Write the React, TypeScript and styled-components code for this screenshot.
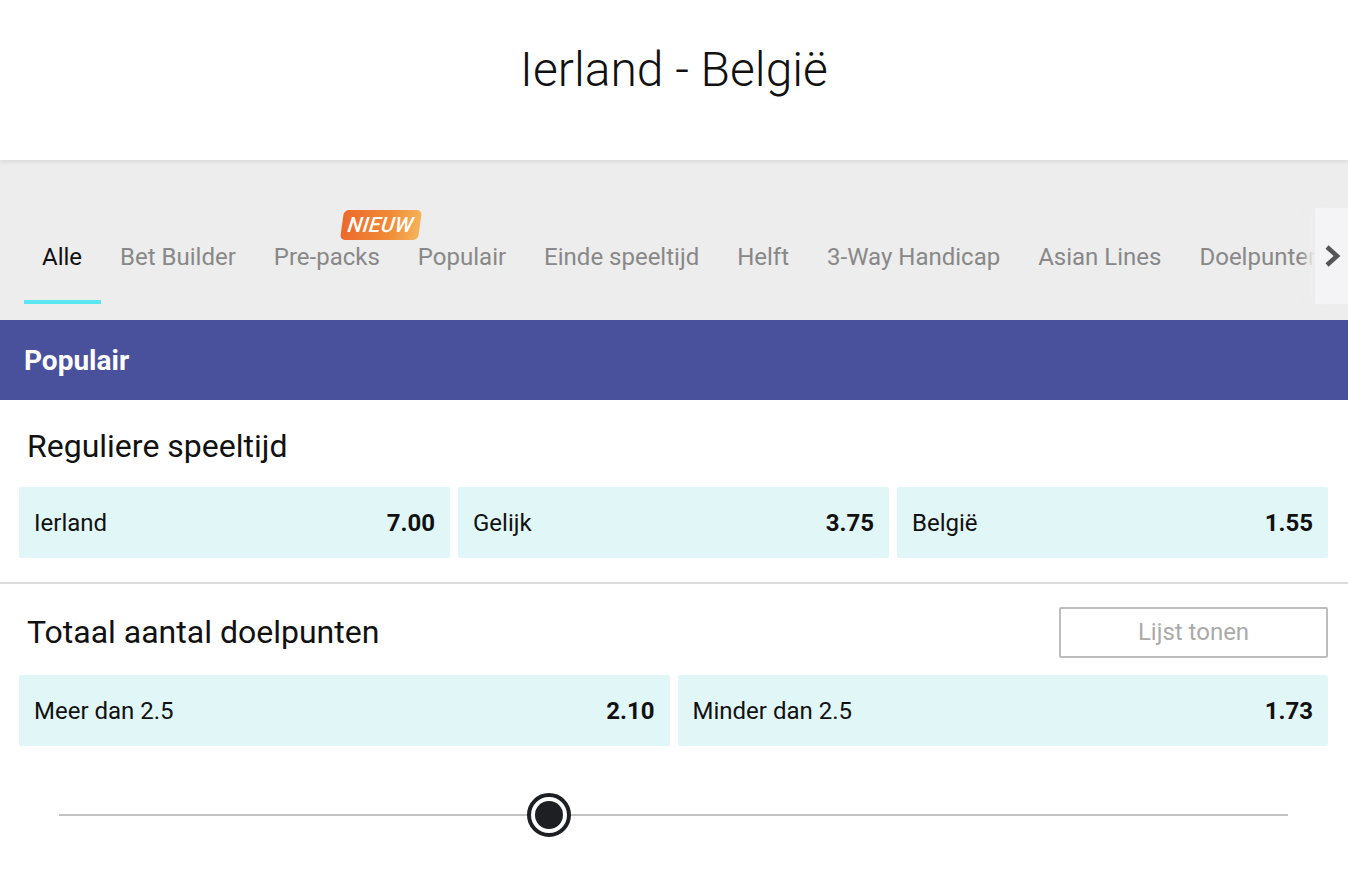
import React from "react";
import styled, { createGlobalStyle } from "styled-components";

const Global = createGlobalStyle`
  html, body { margin: 0; padding: 0; background: #fff; }
  body { font-family: Roboto, "Noto Sans", Arial, sans-serif; color: #111; }
  * { box-sizing: border-box; }
`;

const Page = styled.div`
  width: 1348px;
  height: 882px;
  overflow: hidden;
  background: #fff;
`;

const Header = styled.header`
  height: 160px;
  display: flex;
  justify-content: center;
  padding-top: 39px;
  position: relative;
  z-index: 1;
  box-shadow: 0 2px 4px rgba(0, 0, 0, 0.08);
  background: #fff;
`;

const Title = styled.h1`
  margin: 0;
  font-weight: 300;
  font-size: 48px;
  line-height: 62px;
  color: #111;
`;

const TabBar = styled.nav`
  height: 160px;
  background: #ededed;
  display: flex;
  align-items: flex-start;
  padding-left: 24px;
  position: relative;
  overflow: hidden;
`;

const TabList = styled.div`
  display: flex;
  height: 144px;
  align-items: stretch;
  white-space: nowrap;
`;

const Tab = styled.div<{ $active?: boolean }>`
  position: relative;
  padding: 54px 19px 0 ${(p) => (p.$active ? 18 : 19)}px;
  display: flex;
  align-items: center;
  font-size: 24px;
  color: ${(p) => (p.$active ? "#111" : "#888")};
  border-bottom: 4px solid ${(p) => (p.$active ? "#5ce6f2" : "transparent")};
  height: 144px;
`;

const Badge = styled.span`
  position: absolute;
  top: 50px;
  right: -21px;
  height: 30px;
  padding: 0 6px;
  display: flex;
  align-items: center;
  font-size: 21px;
  font-style: italic;
  font-weight: 500;
  color: #fff;
  letter-spacing: 0.5px;
  border-radius: 5px;
  transform: skewX(-8deg);
  background: linear-gradient(90deg, #ec6a2c 0%, #f08a35 60%, #f5b35a 100%);
`;

const Chevron = styled.div`
  position: absolute;
  right: 0;
  top: 48px;
  width: 33px;
  height: 96px;
  background: #f4f4f7;
  display: flex;
  align-items: center;
  justify-content: center;
  box-shadow: -8px 0 8px rgba(237, 237, 237, 0.95);
`;

const SectionBar = styled.div`
  height: 80px;
  background: #4a519c;
  display: flex;
  align-items: center;
  padding-left: 24px;
  color: #fff;
  font-weight: 700;
  font-size: 28px;
`;

const Market = styled.section<{ $divider?: boolean }>`
  padding: 0 20px 0 19px;
  ${(p) => (p.$divider ? "border-bottom: 2px solid #dcdcdc;" : "")}
`;

const MarketHead = styled.div<{ $h: number }>`
  height: ${(p) => p.$h}px;
  display: flex;
  align-items: center;
  justify-content: space-between;
  padding: 5px 0 0 8px;
`;

const MarketTitle = styled.h2`
  margin: 0;
  font-weight: 400;
  font-size: 32px;
  color: #111;
`;

const ListButton = styled.button`
  width: 269px;
  height: 51px;
  border: 2px solid #bdbdbd;
  border-radius: 2px;
  background: #fff;
  color: #aaa;
  font-family: inherit;
  font-size: 24px;
`;

const OddsRow = styled.div<{ $cols: number; $pb: number }>`
  display: grid;
  grid-template-columns: repeat(${(p) => p.$cols}, 1fr);
  gap: 8px;
  padding-bottom: ${(p) => p.$pb}px;
`;

const Odd = styled.div`
  height: 71px;
  background: #e1f6f6;
  border-radius: 2px;
  display: flex;
  align-items: center;
  justify-content: space-between;
  padding: 0 15px;
  font-size: 24px;
  color: #111;
`;

const Price = styled.span`
  font-weight: 700;
`;

const SliderWrap = styled.div`
  position: relative;
  margin: 47px 60px 0 59px;
  height: 44px;
  display: flex;
  align-items: center;
`;

const Track = styled.div`
  flex: 1;
  height: 2px;
  background: #c2c2c2;
`;

const Knob = styled.div`
  position: absolute;
  left: 468px;
  top: 0;
  width: 44px;
  height: 44px;
  border-radius: 50%;
  background: #fff;
  border: 4px solid #1d1f23;
  display: flex;
  align-items: center;
  justify-content: center;
  &::after {
    content: "";
    width: 28px;
    height: 28px;
    border-radius: 50%;
    background: #1d1f23;
  }
`;

const tabs = [
  "Alle",
  "Bet Builder",
  "Pre-packs",
  "Populair",
  "Einde speeltijd",
  "Helft",
  "3-Way Handicap",
  "Asian Lines",
  "Doelpunten",
];

export default function App() {
  return (
    <Page>
      <Global />
      <Header>
        <Title>Ierland - België</Title>
      </Header>
      <TabBar>
        <TabList>
          {tabs.map((t, i) => (
            <Tab key={t} $active={i === 0}>
              {t}
              {t === "Pre-packs" && <Badge>NIEUW</Badge>}
            </Tab>
          ))}
        </TabList>
        <Chevron>
          <svg width="20" height="24" viewBox="0 0 20 24">
            <path d="M5 3 L15 12 L5 21" fill="none" stroke="#555" strokeWidth="4.5" />
          </svg>
        </Chevron>
      </TabBar>
      <SectionBar>Populair</SectionBar>
      <Market $divider>
        <MarketHead $h={87}>
          <MarketTitle>Reguliere speeltijd</MarketTitle>
        </MarketHead>
        <OddsRow $cols={3} $pb={24}>
          <Odd>
            <span>Ierland</span>
            <Price>7.00</Price>
          </Odd>
          <Odd>
            <span>Gelijk</span>
            <Price>3.75</Price>
          </Odd>
          <Odd>
            <span>België</span>
            <Price>1.55</Price>
          </Odd>
        </OddsRow>
      </Market>
      <Market>
        <MarketHead $h={91}>
          <MarketTitle>Totaal aantal doelpunten</MarketTitle>
          <ListButton>Lijst tonen</ListButton>
        </MarketHead>
        <OddsRow $cols={2} $pb={0}>
          <Odd>
            <span>Meer dan 2.5</span>
            <Price>2.10</Price>
          </Odd>
          <Odd>
            <span>Minder dan 2.5</span>
            <Price>1.73</Price>
          </Odd>
        </OddsRow>
      </Market>
      <SliderWrap>
        <Track />
        <Knob />
      </SliderWrap>
    </Page>
  );
}
